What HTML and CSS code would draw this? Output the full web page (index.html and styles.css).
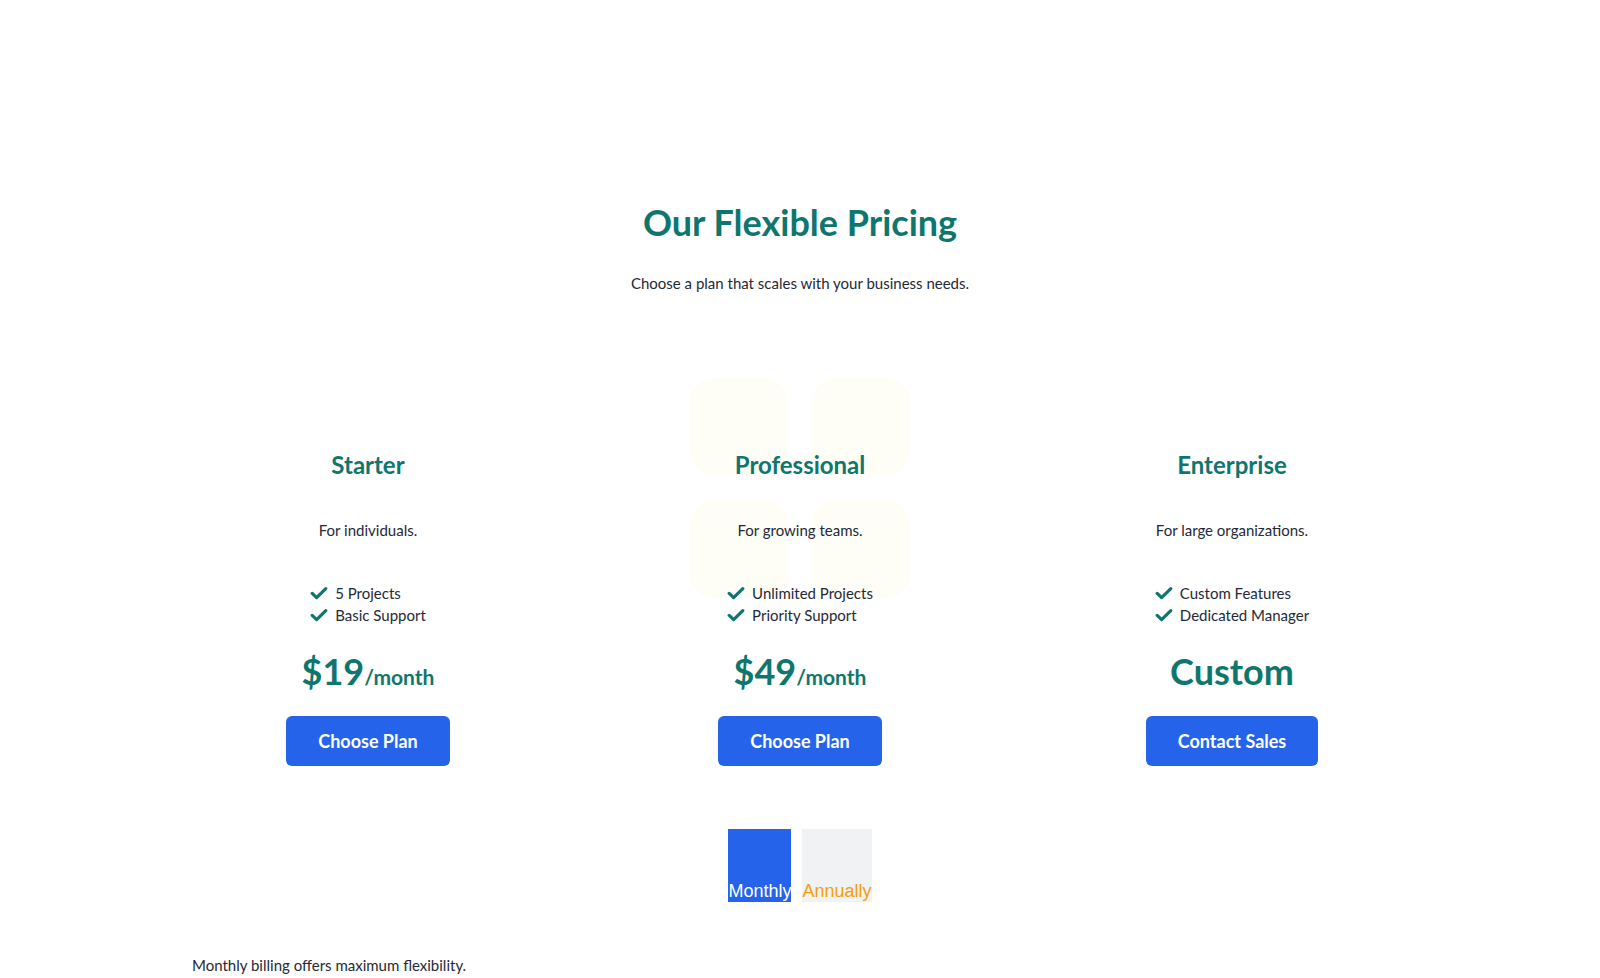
FILE: index.html
```html
<!DOCTYPE html>
<html lang="en">
<head>
<meta charset="utf-8">
<title>Pricing</title>
<link rel="stylesheet" href="styles.css">
</head>
<body>
<main class="pricing">
  <h1 class="title">Our Flexible Pricing</h1>
  <p class="subtitle">Choose a plan that scales with your business needs.</p>

  <div class="plans">
    <div class="plan">
      <h2 class="plan-name">Starter</h2>
      <p class="plan-desc">For individuals.</p>
      <ul class="features">
        <li><svg class="check" viewBox="0 0 18 16"><polyline points="2.2,8.4 6.6,12.6 15.8,3.6"/></svg>5 Projects</li>
        <li><svg class="check" viewBox="0 0 18 16"><polyline points="2.2,8.4 6.6,12.6 15.8,3.6"/></svg>Basic Support</li>
      </ul>
      <div class="price">$19<span class="per">/month</span></div>
      <button class="cta">Choose Plan</button>
    </div>

    <div class="plan plan-featured">
      <div class="deco" aria-hidden="true">
        <span></span><span></span><span></span><span></span>
      </div>
      <h2 class="plan-name">Professional</h2>
      <p class="plan-desc">For growing teams.</p>
      <ul class="features">
        <li><svg class="check" viewBox="0 0 18 16"><polyline points="2.2,8.4 6.6,12.6 15.8,3.6"/></svg>Unlimited Projects</li>
        <li><svg class="check" viewBox="0 0 18 16"><polyline points="2.2,8.4 6.6,12.6 15.8,3.6"/></svg>Priority Support</li>
      </ul>
      <div class="price">$49<span class="per">/month</span></div>
      <button class="cta">Choose Plan</button>
    </div>

    <div class="plan">
      <h2 class="plan-name">Enterprise</h2>
      <p class="plan-desc">For large organizations.</p>
      <ul class="features">
        <li><svg class="check" viewBox="0 0 18 16"><polyline points="2.2,8.4 6.6,12.6 15.8,3.6"/></svg>Custom Features</li>
        <li><svg class="check" viewBox="0 0 18 16"><polyline points="2.2,8.4 6.6,12.6 15.8,3.6"/></svg>Dedicated Manager</li>
      </ul>
      <div class="price">Custom</div>
      <button class="cta">Contact Sales</button>
    </div>
  </div>

  <div class="toggle">
    <button class="toggle-btn toggle-on">Monthly</button>
    <button class="toggle-btn toggle-off">Annually</button>
  </div>

  <p class="note">Monthly billing offers maximum flexibility.</p>
</main>
</body>
</html>
```

FILE: styles.css
```css
* { box-sizing: border-box; }

html, body {
  margin: 0;
  padding: 0;
  background: #ffffff;
}

body {
  font-family: "Lato", "Noto Sans", sans-serif;
  color: #1f2937;
}

.pricing {
  width: 1216px;
  margin: 0 auto;
  padding-top: 202px;
  display: flex;
  flex-direction: column;
}

.title {
  margin: 0;
  text-align: center;
  font-size: 36px;
  line-height: 40px;
  font-weight: 700;
  color: #0f766e;
}

.subtitle {
  margin: 29px 0 0;
  text-align: center;
  font-size: 15px;
  line-height: 24px;
}

.plans {
  margin-top: 83px;
  display: grid;
  grid-template-columns: repeat(3, 1fr);
  column-gap: 80px;
}

.plan {
  position: relative;
  padding-top: 71px;
  display: flex;
  flex-direction: column;
  align-items: center;
  text-align: center;
}

.deco {
  position: absolute;
  top: 0;
  left: 50%;
  transform: translateX(-50%);
  display: grid;
  grid-template-columns: 98px 98px;
  grid-auto-rows: 98px;
  gap: 24px;
  z-index: 0;
}

.deco span {
  display: block;
  background: #fefdf6;
  border-radius: 24px;
}

.plan > *:not(.deco) { position: relative; z-index: 1; }

.plan-name {
  margin: 0;
  font-size: 24px;
  line-height: 32px;
  font-weight: 700;
  color: #0f766e;
}

.plan-desc {
  margin: 37px 0 0;
  font-size: 15px;
  line-height: 24px;
}

.features {
  margin: 40px 0 0;
  padding: 0;
  list-style: none;
  text-align: left;
}

.features li {
  display: flex;
  align-items: center;
  gap: 7px;
  font-size: 15px;
  line-height: 22px;
}

.check {
  width: 18px;
  height: 16px;
  flex: none;
  fill: none;
  stroke: #0f766e;
  stroke-width: 3.2;
  stroke-linecap: round;
  stroke-linejoin: round;
}

.price {
  margin-top: 25px;
  height: 40px;
  font-size: 36px;
  line-height: 40px;
  font-weight: 700;
  color: #0f766e;
}

.per {
  font-size: 21px;
  line-height: 1;
  font-weight: 700;
}

.cta {
  margin-top: 25px;
  height: 50px;
  padding: 0 32px;
  border: none;
  border-radius: 6px;
  background: #2563eb;
  color: #ffffff;
  font-family: inherit;
  font-size: 18px;
  font-weight: 700;
  cursor: pointer;
}

.toggle {
  margin-top: 63px;
  display: flex;
  justify-content: center;
  gap: 11px;
}

.toggle-btn {
  height: 73px;
  padding: 0;
  border: none;
  border-radius: 0;
  display: flex;
  align-items: flex-end;
  font-family: "Liberation Sans", Arial, sans-serif;
  font-size: 18px;
  line-height: 21px;
  cursor: pointer;
}

.toggle-on {
  background: #2563eb;
  color: #ffffff;
}

.toggle-off {
  background: #f1f2f4;
  color: #f59e0b;
}

.note {
  margin: 51px 0 0;
  font-size: 15px;
  line-height: 24px;
}
```
